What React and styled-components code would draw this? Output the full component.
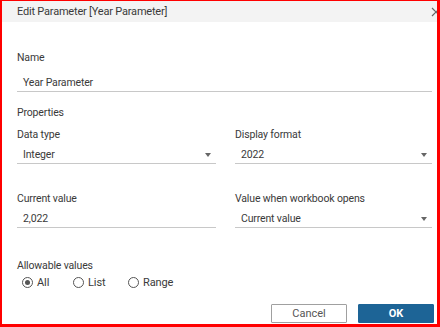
import React from 'react';
import styled, { createGlobalStyle } from 'styled-components';

const Global = createGlobalStyle`
  html, body {
    margin: 0;
    padding: 0;
    background: #fff;
  }
  body {
    font-family: Roboto, 'Noto Sans', sans-serif;
    color: #333;
  }
`;

const Frame = styled.div`
  box-sizing: border-box;
  width: 440px;
  height: 327px;
  border-style: solid;
  border-color: #ff0000;
  border-width: 1px 3px 3px 2px;
  display: flex;
  flex-direction: column;
  overflow: hidden;
  background: #fff;
`;

const Header = styled.header`
  height: 21px;
  flex: none;
  background: #f3f3f3;
  display: flex;
  align-items: center;
  justify-content: space-between;
  padding-left: 15px;
  position: relative;
`;

const Title = styled.span`
  font-size: 11px;
  letter-spacing: -0.2px;
  color: #3a3a3a;
`;

const Close = styled.svg`
  position: absolute;
  right: -4px;
  top: 6px;
`;

const Body = styled.main`
  flex: 1;
  display: flex;
  flex-direction: column;
  padding: 29px 3px 0 15px;
`;

const Label = styled.div`
  font-size: 10.5px;
  letter-spacing: -0.15px;
  line-height: 14px;
  height: 14px;
  color: #3a3a3a;
  margin-top: ${p => p.$top || 0}px;
  margin-right: 2px;
`;

const Field = styled.div`
  box-sizing: border-box;
  height: 19px;
  margin-top: ${p => p.$top || 3}px;
  border-bottom: 1px solid #c8c8c8;
  display: flex;
  align-items: center;
  justify-content: space-between;
  padding: 0 5px 0 6px;
  font-size: 10.5px;
  letter-spacing: -0.15px;
  color: #3a3a3a;
  margin-right: ${p => p.$right || 0}px;
`;

const Caret = styled.span`
  width: 0;
  height: 0;
  border-left: 3px solid transparent;
  border-right: 3px solid transparent;
  border-top: 4px solid #666;
  margin-top: 1px;
`;

const Grid = styled.div`
  display: grid;
  grid-template-columns: 199px 197px;
  column-gap: 19px;
  margin-top: ${p => p.$top || 0}px;
`;

const Column = styled.div`
  display: flex;
  flex-direction: column;
`;

const Radios = styled.div`
  display: flex;
  align-items: center;
  height: 14px;
  margin-top: 2px;
  padding-left: 5px;
`;

const RadioItem = styled.label`
  display: flex;
  align-items: center;
  width: ${p => p.$w}px;
  font-size: 11px;
  letter-spacing: -0.1px;
  color: #3a3a3a;
`;

const Circle = styled.span`
  box-sizing: border-box;
  width: 11px;
  height: 11px;
  border-radius: 50%;
  border: 1px solid #555;
  margin-right: 4px;
  display: flex;
  align-items: center;
  justify-content: center;

  &::after {
    content: '';
    width: 5px;
    height: 5px;
    border-radius: 50%;
    background: ${p => (p.$on ? '#555' : 'transparent')};
  }
`;

const Footer = styled.div`
  display: flex;
  justify-content: flex-end;
  gap: 11px;
  margin-top: 15px;
`;

const Button = styled.button`
  box-sizing: border-box;
  width: 76px;
  height: 19px;
  padding: 0;
  font-family: Roboto, 'Noto Sans', sans-serif;
  font-size: 11px;
  border-radius: 1px;
  border: 1px solid ${p => (p.$primary ? '#1d6496' : '#a0a0a0')};
  background: ${p => (p.$primary ? '#1d6496' : '#fff')};
  color: ${p => (p.$primary ? '#fff' : '#555')};
  font-weight: ${p => (p.$primary ? 700 : 400)};
`;

const Select = ({ value, right }) => (
  <Field $right={right}>
    <span>{value}</span>
    <Caret />
  </Field>
);

export default function App() {
  return (
    <>
      <Global />
      <Frame>
        <Header>
          <Title>Edit Parameter [Year Parameter]</Title>
          <Close width="10" height="10" viewBox="0 0 10 10">
            <path d="M1 1 L9 9 M9 1 L1 9" stroke="#666" strokeWidth="1.2" fill="none" />
          </Close>
        </Header>
        <Body>
          <Label>Name</Label>
          <Field $top={8} $right={2}>
            <span>Year Parameter</span>
          </Field>

          <Label $top={14}>Properties</Label>
          <Grid $top={8}>
            <Column>
              <Label>Data type</Label>
              <Select value="Integer" />
            </Column>
            <Column>
              <Label>Display format</Label>
              <Select value="2022" />
            </Column>
          </Grid>

          <Grid $top={28}>
            <Column>
              <Label>Current value</Label>
              <Field>
                <span>2,022</span>
              </Field>
            </Column>
            <Column>
              <Label>Value when workbook opens</Label>
              <Select value="Current value" />
            </Column>
          </Grid>

          <Label $top={31}>Allowable values</Label>
          <Radios>
            <RadioItem $w={51}>
              <Circle $on />
              All
            </RadioItem>
            <RadioItem $w={55}>
              <Circle />
              List
            </RadioItem>
            <RadioItem $w={60}>
              <Circle />
              Range
            </RadioItem>
          </Radios>

          <Footer>
            <Button>Cancel</Button>
            <Button $primary>OK</Button>
          </Footer>
        </Body>
      </Frame>
    </>
  );
}
